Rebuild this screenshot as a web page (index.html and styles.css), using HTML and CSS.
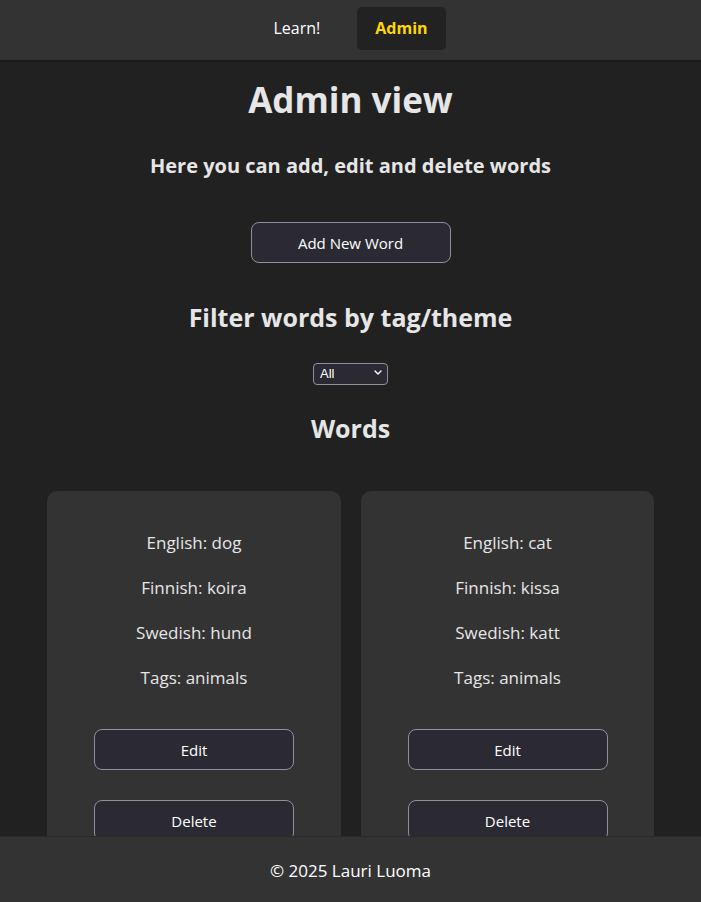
FILE: index.html
```html
<!DOCTYPE html>
<html lang="en">
<head>
<meta charset="utf-8">
<title>Admin view</title>
<link rel="stylesheet" href="styles.css">
</head>
<body>
<nav class="navbar">
  <a class="nav-link" href="#">Learn!</a>
  <a class="nav-link active" href="#">Admin</a>
</nav>
<main class="content">
  <h1 class="title">Admin view</h1>
  <h3 class="subtitle">Here you can add, edit and delete words</h3>
  <button class="btn btn-add">Add New Word</button>
  <h2 class="section-title filter-title">Filter words by tag/theme</h2>
  <div class="select-wrap">
    <select class="tag-select">
      <option>All</option>
      <option>animals</option>
    </select>
    <svg class="select-chevron" width="8" height="5" viewBox="0 0 8 5" aria-hidden="true"><path d="M1 1l3 3 3-3" fill="none" stroke="#ffffff" stroke-width="1.4" stroke-linecap="round" stroke-linejoin="round"/></svg>
  </div>
  <h2 class="section-title words-title">Words</h2>
  <div class="word-grid">
    <div class="word-card">
      <p class="word-line">English: dog</p>
      <p class="word-line">Finnish: koira</p>
      <p class="word-line">Swedish: hund</p>
      <p class="word-line">Tags: animals</p>
      <button class="btn btn-card btn-edit">Edit</button>
      <button class="btn btn-card">Delete</button>
    </div>
    <div class="word-card">
      <p class="word-line">English: cat</p>
      <p class="word-line">Finnish: kissa</p>
      <p class="word-line">Swedish: katt</p>
      <p class="word-line">Tags: animals</p>
      <button class="btn btn-card btn-edit">Edit</button>
      <button class="btn btn-card">Delete</button>
    </div>
  </div>
</main>
<footer class="footer">© 2025 Lauri Luoma</footer>
</body>
</html>
```
FILE: styles.css
```css
* { box-sizing: border-box; }
html, body { height: 100%; }
body {
  margin: 0;
  background: #212121;
  color: #e6e6e6;
  font-family: "Open Sans", "Noto Sans", sans-serif;
  overflow: hidden;
}
.navbar {
  height: 62px;
  padding-bottom: 3px;
  background: #333333;
  border-bottom: 2px solid #1b1b1b;
  display: flex;
  justify-content: center;
  align-items: center;
  gap: 20px;
}
.nav-link {
  color: #ffffff;
  text-decoration: none;
  font-size: 16px;
  padding: 0 18px;
  height: 43px;
  line-height: 43px;
  border-radius: 5px;
}
.nav-link.active {
  background: #222222;
  color: #ffd700;
  font-weight: 700;
  margin-left: -1px;
}
.content {
  display: flex;
  flex-direction: column;
  align-items: center;
}
.title {
  margin: 16px 0 0;
  font-size: 35px;
  line-height: 44px;
  font-weight: 700;
}
.subtitle {
  margin: 30px 0 0;
  font-size: 20px;
  line-height: 28px;
  font-weight: 700;
}
.btn {
  font-family: inherit;
  background: #2b2a33;
  color: #ffffff;
  border: 1px solid #8f8f9d;
  border-radius: 8px;
  width: 200px;
  height: 41px;
  font-size: 15px;
  cursor: pointer;
}
.btn-add { margin-top: 42px; }
.section-title {
  font-size: 25px;
  line-height: 34px;
  font-weight: 700;
  margin: 0;
}
.filter-title { margin-top: 37px; }
.select-wrap {
  margin-top: 27px;
  position: relative;
  width: 75px;
  height: 22px;
}
.tag-select {
  appearance: none;
  -webkit-appearance: none;
  width: 75px;
  height: 22px;
  padding: 0 0 0 6px;
  background: #2b2a33;
  color: #ffffff;
  border: 1px solid #8f8f9d;
  border-radius: 4px;
  font-family: "Liberation Sans", Arial, sans-serif;
  font-size: 13px;
}
.select-chevron {
  position: absolute;
  right: 6px;
  top: 9px;
  pointer-events: none;
}
.words-title { margin-top: 28px; }
.word-grid {
  margin-top: 46px;
  display: grid;
  grid-template-columns: 294px 293px;
  gap: 20px;
}
.word-card {
  background: #333333;
  border-radius: 10px;
  padding: 40px 0 30px;
  display: flex;
  flex-direction: column;
  align-items: center;
}
.word-line {
  margin: 0 0 21px;
  font-size: 17px;
  line-height: 24px;
}
.btn-card { flex: none; }
.btn-edit { margin-top: 18px; margin-bottom: 30px; }
.footer {
  position: fixed;
  left: 0;
  right: 0;
  bottom: 0;
  height: 66px;
  padding-top: 2px;
  background: #333333;
  border-top: 1px solid #2a2a2a;
  display: flex;
  align-items: center;
  justify-content: center;
  font-size: 17px;
  color: #ffffff;
}
```
